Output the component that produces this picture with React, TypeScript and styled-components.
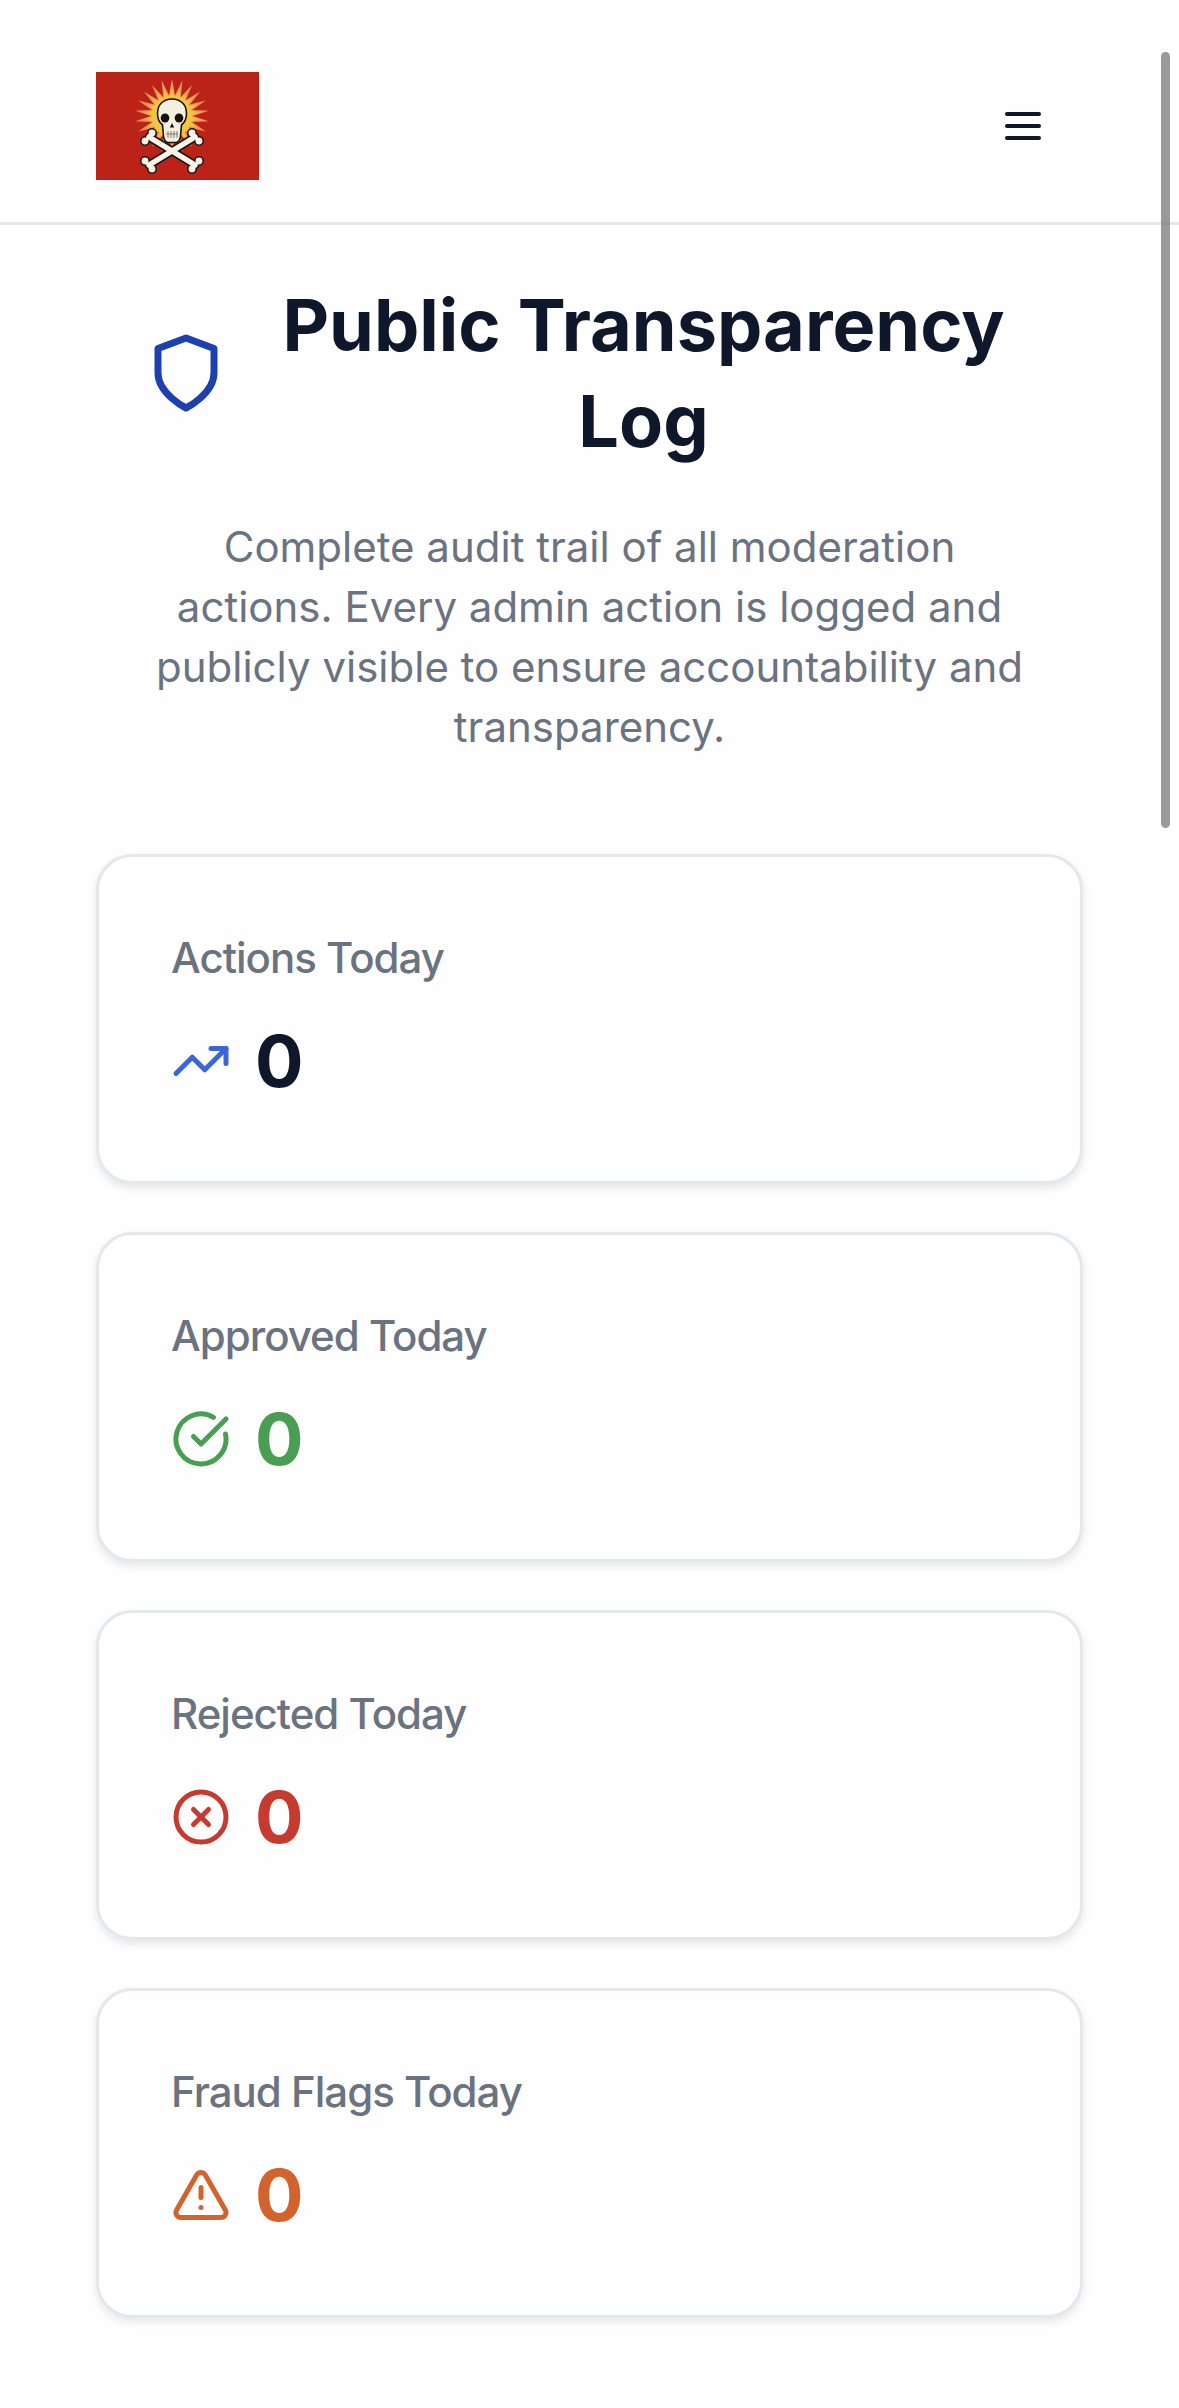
import React from "react";
import styled, { createGlobalStyle } from "styled-components";

const Global = createGlobalStyle`
  html, body { margin: 0; padding: 0; background: #fefefe; overflow: hidden; }
  * { box-sizing: border-box; }
  body { font-family: Inter, "Liberation Sans", sans-serif; }
`;

const Page = styled.div`
  position: relative;
  width: 1179px;
  height: 2408px;
  overflow: hidden;
  background: #fefefe;
`;
const Scrollbar = styled.div`
  position: absolute;
  top: 52px;
  right: 9px;
  width: 9px;
  height: 776px;
  border-radius: 5px;
  background: rgba(120, 120, 120, 0.75);
`;
const TopBar = styled.header`
  height: 225px;
  padding: 72px 96px 0;
  display: flex;
  justify-content: space-between;
  align-items: flex-start;
  border-bottom: 3px solid #e3e6ea;
`;
const Burger = styled.button`
  width: 96px;
  height: 96px;
  margin: 6px 12px 0 0;
  padding: 24px;
  border: 0;
  background: none;
  color: #0f172a;
  display: flex;
`;
const Main = styled.main`
  padding: 52px 96px 0;
`;
const Intro = styled.section`
  padding: 0 48px;
  margin-bottom: 97px;
`;
const TitleRow = styled.div`
  display: flex;
  align-items: center;
  gap: 24px;
  margin-bottom: 48px;
`;
const ShieldWrap = styled.span`
  flex: none;
  display: flex;
  color: #1e40af;
`;
const Title = styled.h1`
  flex: 1;
  margin: 0;
  font-size: 72px;
  line-height: 96px;
  font-weight: 700;
  text-align: center;
  color: #0f172a;
`;
const Lead = styled.p`
  margin: 0;
  font-size: 42px;
  line-height: 60px;
  font-weight: 400;
  text-align: center;
  color: #6b7280;
`;
const Cards = styled.div`
  display: flex;
  flex-direction: column;
  gap: 48px;
`;
const Card = styled.article`
  height: 330px;
  padding: 71px 72px 72px;
  background: #fefefe;
  border: 3px solid #e3e8ec;
  border-radius: 36px;
  box-shadow: 0 4px 9px rgba(15, 23, 42, 0.1);
`;
const Label = styled.div`
  font-size: 42px;
  line-height: 60px;
  font-weight: 500;
  letter-spacing: -1px;
  color: #6b7280;
`;
const ValueRow = styled.div<{ $color: string }>`
  display: flex;
  align-items: center;
  gap: 24px;
  margin-top: 25px;
  color: ${(p) => p.$color};
`;
const Value = styled.span<{ $color: string }>`
  font-size: 72px;
  line-height: 96px;
  font-weight: 700;
  color: ${(p) => p.$color};
`;

const Icon: React.FC<{ size: number; children: React.ReactNode }> = ({ size, children }) => (
  <svg width={size} height={size} viewBox="0 0 24 24" fill="none" stroke="currentColor" strokeWidth="2" strokeLinecap="round" strokeLinejoin="round">
    {children}
  </svg>
);

const sunPoints = (n: number, outer: number, inner: number) => {
  const pts: string[] = [];
  for (let i = 0; i < n * 2; i++) {
    const r = i % 2 === 0 ? outer : inner;
    const a = (Math.PI * i) / n - Math.PI / 2;
    pts.push(`${(76 + r * Math.cos(a)).toFixed(1)},${(44 + r * Math.sin(a)).toFixed(1)}`);
  }
  return pts.join(" ");
};

const boneEnds: [number, number][] = [
  [49, 69], [56, 61], [103, 69], [96, 61], [49, 89], [56, 97], [103, 89], [96, 97],
];

const Logo = () => (
  <svg width="163" height="108" viewBox="0 0 163 108">
    <rect width="163" height="108" fill="#bb2318" />
    <polygon points={sunPoints(22, 37, 21)} fill="#ee9a55" />
    <polygon points={sunPoints(22, 27, 19)} fill="#f5be45" />
    <circle cx="76" cy="44" r="20" fill="#f4c63f" />
    <path d="M76 27C67 27 61.500 33 61.500 41.500c0 5.500 1.800 9 5 11.500l1 11c.2 3 2 6.500 4.500 6.500h8c2.500 0 4.300-3.500 4.500-6.500l1-11c3.200-2.500 5-6 5-11.500C90.500 33 85 27 76 27z" fill="#f2eee0" stroke="#1c1410" strokeWidth="1.600" />
    <ellipse cx="69" cy="46" rx="4.300" ry="4.600" fill="#17110e" />
    <ellipse cx="83" cy="46" rx="4.300" ry="4.600" fill="#17110e" />
    <path d="M76 51l-2.200 4.500h4.400z" fill="#17110e" />
    <path d="M70 62h12M72 59v7M75 59v7M78 59v7M81 59v7" stroke="#6a6258" strokeWidth="0.800" />
    <g strokeLinecap="round">
      <line x1="53" y1="65" x2="99" y2="93" stroke="#1c1410" strokeWidth="8.500" />
      <line x1="99" y1="65" x2="53" y2="93" stroke="#1c1410" strokeWidth="8.500" />
      {boneEnds.map(([x, y]) => (
        <circle key={`${x}-${y}`} cx={x} cy={y} r="4.200" fill="#f6f3e8" stroke="#1c1410" strokeWidth="1.500" />
      ))}
      <line x1="53" y1="65" x2="99" y2="93" stroke="#f6f3e8" strokeWidth="5.500" />
      <line x1="99" y1="65" x2="53" y2="93" stroke="#f6f3e8" strokeWidth="5.500" />
    </g>
  </svg>
);

const stats = [
  {
    label: "Actions Today",
    color: "#0f172a",
    iconColor: "#3b66d4",
    icon: (
      <>
        <polyline points="22 7 13.500 15.500 8.500 10.500 2 17" />
        <polyline points="16 7 22 7 22 13" />
      </>
    ),
  },
  {
    label: "Approved Today",
    color: "#4a9e54",
    iconColor: "#4a9e54",
    icon: (
      <>
        <path d="M21.801 10A10 10 0 1 1 17 3.335" />
        <path d="m9 11 3 3L22 4" />
      </>
    ),
  },
  {
    label: "Rejected Today",
    color: "#c63a30",
    iconColor: "#c63a30",
    icon: (
      <>
        <circle cx="12" cy="12" r="10" />
        <path d="m15 9-6 6" />
        <path d="m9 9 6 6" />
      </>
    ),
  },
  {
    label: "Fraud Flags Today",
    color: "#d2632c",
    iconColor: "#d2632c",
    icon: (
      <>
        <path d="m21.730 18-8-14a2 2 0 0 0-3.480 0l-8 14A2 2 0 0 0 4 21h16a2 2 0 0 0 1.730-3" />
        <path d="M12 9v4" />
        <path d="M12 17h.01" />
      </>
    ),
  },
];

export default function App() {
  return (
    <Page>
      <Global />
      <TopBar>
        <Logo />
        <Burger aria-label="Menu">
          <Icon size={48}>
            <path d="M4 6h16M4 12h16M4 18h16" />
          </Icon>
        </Burger>
      </TopBar>
      <Main>
        <Intro>
          <TitleRow>
            <ShieldWrap>
              <Icon size={84}>
                <path d="M12 22s8-4 8-10V5l-8-3-8 3v7c0 6 8 10 8 10z" />
              </Icon>
            </ShieldWrap>
            <Title>Public Transparency Log</Title>
          </TitleRow>
          <Lead>
            Complete audit trail of all moderation actions. Every admin action is logged and publicly visible to ensure accountability and transparency.
          </Lead>
        </Intro>
        <Cards>
          {stats.map((s) => (
            <Card key={s.label}>
              <Label>{s.label}</Label>
              <ValueRow $color={s.iconColor}>
                <Icon size={60}>{s.icon}</Icon>
                <Value $color={s.color}>0</Value>
              </ValueRow>
            </Card>
          ))}
        </Cards>
      </Main>
      <Scrollbar />
    </Page>
  );
}
